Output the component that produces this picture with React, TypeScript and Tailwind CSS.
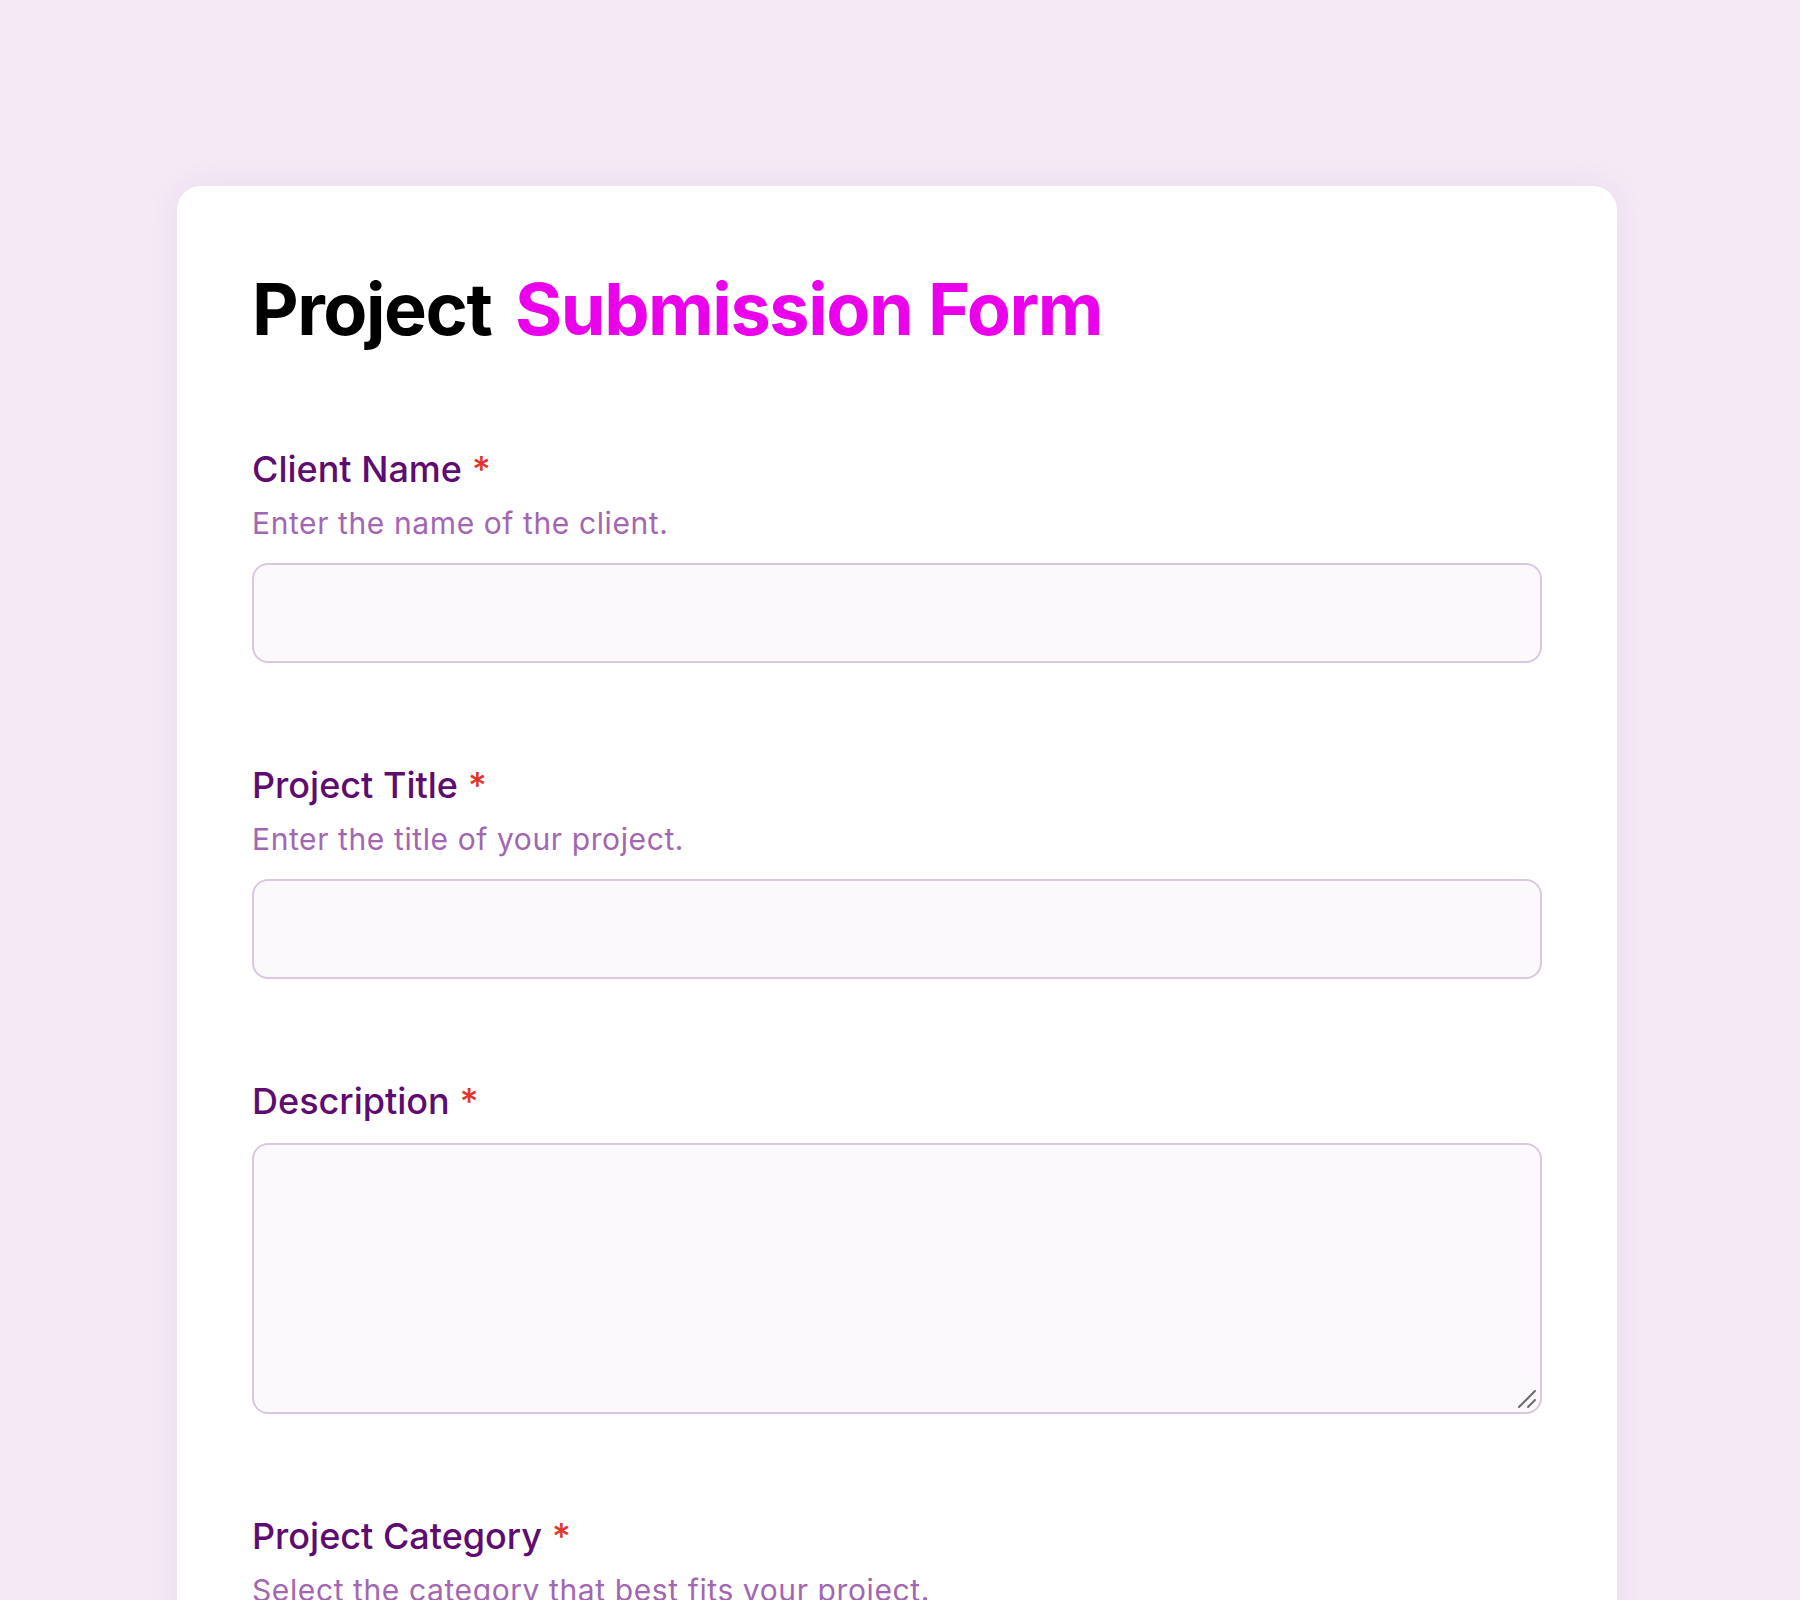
import React from "react";

interface FieldProps {
  label: string;
  hint?: string;
  children: React.ReactNode;
}

function Field({ label, hint, children }: FieldProps) {
  return (
    <div className="flex flex-col">
      <label className="text-[36px] leading-[48px] font-medium text-[#5e0b72]">
        {label}
        <span className="ml-[10px] text-[#e0352b]">*</span>
      </label>
      {hint ? (
        <>
          <p className="mt-[10px] text-[30px] leading-[40px] tracking-[0.02em] text-[#a266b3]">{hint}</p>
          <div className="mt-[20px]">{children}</div>
        </>
      ) : (
        <div className="mt-[18px]">{children}</div>
      )}
    </div>
  );
}

const inputCls =
  "block w-full rounded-[16px] border-2 border-[#dac8e1] bg-[#fbf9fc] px-6 text-[30px] text-[#3b0a47] outline-none";

export default function App() {
  return (
    <div className="min-h-screen bg-[#f5e9f6] pt-[186px] pb-24 font-['Inter',sans-serif]">
      <div className="ml-[177px] w-[1440px] rounded-[24px] bg-white px-[75px] pt-[87px] pb-20 shadow-[0_0_32px_rgba(90,40,100,0.07)]">
        <h1 className="text-[72px] leading-[72px] font-bold tracking-[-0.02em] text-black">
          Project <span className="ml-[8px] text-[#ea00ea]">Submission Form</span>
        </h1>

        <div className="mt-[100px] flex flex-col gap-[98px]">
          <Field label="Client Name" hint="Enter the name of the client.">
            <input type="text" className={`${inputCls} h-[100px]`} />
          </Field>

          <Field label="Project Title" hint="Enter the title of your project.">
            <input type="text" className={`${inputCls} h-[100px]`} />
          </Field>

          <Field label="Description">
            <div className="relative">
              <textarea className={`${inputCls} h-[271px] resize-none py-5`} />
              {/* resize grip */}
              <svg
                className="pointer-events-none absolute right-[4px] bottom-[4px] h-[22px] w-[22px]"
                viewBox="0 0 22 22"
                fill="none"
                stroke="#6b6b6b"
                strokeWidth="2"
                strokeLinecap="round"
              >
                <path d="M3 19L19 3" />
                <path d="M12 19L19 12" />
              </svg>
            </div>
          </Field>

          <Field label="Project Category" hint="Select the category that best fits your project.">
            <select className={`${inputCls} h-[100px]`} defaultValue="">
              <option value="" disabled>
                Choose a category
              </option>
              <option>Web Development</option>
              <option>Mobile App</option>
              <option>Branding</option>
              <option>Other</option>
            </select>
          </Field>
        </div>
      </div>
    </div>
  );
}
